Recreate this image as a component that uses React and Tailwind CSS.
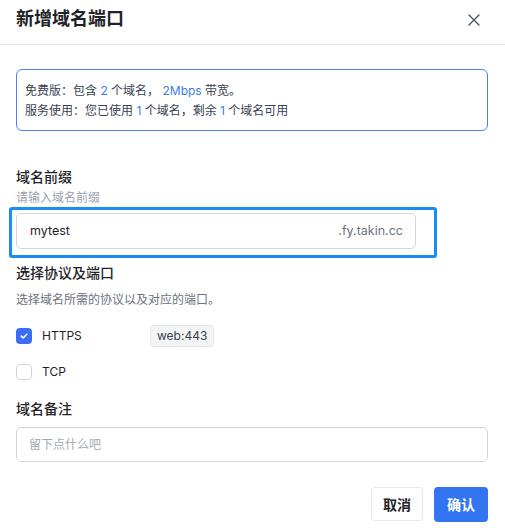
import React from "react";

const font = { fontFamily: 'Inter, "Noto Sans CJK SC", sans-serif' };

function Check() {
  return (
    <svg width="10" height="10" viewBox="0 0 10 10" fill="none">
      <path d="M2.3 5.2 L4.2 7 L7.8 3.3" stroke="white" strokeWidth="1.6" strokeLinecap="round" strokeLinejoin="round" />
    </svg>
  );
}

export default function App() {
  return (
    <div className="w-[505px] h-[528px] bg-white text-[#1f2328]" style={font}>
      <div className="h-[45px] flex items-center justify-between pl-4 pr-[25px] border-b border-[#e5e7eb] pb-[6px]">
        <div className="text-[18px] font-bold leading-[26px]">新增域名端口</div>
        <svg width="12" height="12" viewBox="0 0 12 12" className="mt-[2px]">
          <path d="M1 1 L11 11 M11 1 L1 11" stroke="#4b5563" strokeWidth="1.4" strokeLinecap="round" />
        </svg>
      </div>

      <div className="pl-4 pr-[17px]">
        <div className="mt-6 border border-[#4a80f0] rounded-[6px] pl-2 pr-2 pt-[11px] pb-[9px] text-[12px] leading-[20px] text-[#374151]">
          <div>
            免费版：包含 <span className="text-[#3b7cf5]">2</span> 个域名， <span className="text-[#3b7cf5]">2Mbps</span> 带宽。
          </div>
          <div>
            服务使用：您已使用 <span className="text-[#3b7cf5]">1</span> 个域名，剩余 <span className="text-[#3b7cf5]">1</span> 个域名可用
          </div>
        </div>

        <div className="mt-[36px] text-[14px] leading-[20px] font-medium text-[#1f2328]">域名前缀</div>
        <div className="mt-[3px] text-[12px] leading-[16px] text-[#9ca3af]">请输入域名前缀</div>
        <div className="mt-[1px] -ml-[7px] w-[428px] border-[3px] border-[#1a8cf5] rounded-[3px] pl-[4px] pt-[3px] pr-[18px] pb-[6px]">
          <div className="h-[36px] border border-[#d4d6dd] rounded-[5px] flex items-center justify-between pl-[13px] pr-[12px] text-[12.5px]">
            <span className="text-[#1f2328]">mytest</span>
            <span className="text-[#6b7280]">.fy.takin.cc</span>
          </div>
        </div>

        <div className="mt-[5px] text-[14px] leading-[20px] font-medium text-[#1f2328]">选择协议及端口</div>
        <div className="mt-[9px] text-[12px] leading-[16px] text-[#6b7280]">选择域名所需的协议以及对应的端口。</div>

        <div className="mt-[17px] flex flex-col gap-[14px]">
          <div className="h-[22px] flex items-center">
            <div className="w-4 h-4 rounded-[4px] bg-[#3b6ef5] flex items-center justify-center">
              <Check />
            </div>
            <span className="ml-[10px] w-[108px] text-[12px] text-[#1f2328]">HTTPS</span>
            <span className="h-[22px] px-[6px] flex items-center rounded-[4px] bg-[#f3f4f6] border border-[#e5e7eb] text-[12px] text-[#374151]">web:443</span>
          </div>
          <div className="h-[22px] flex items-center">
            <div className="w-4 h-4 rounded-[4px] border border-[#d1d5db] bg-white" />
            <span className="ml-[10px] text-[12px] text-[#1f2328]">TCP</span>
          </div>
        </div>

        <div className="mt-[16px] text-[14px] leading-[20px] font-medium text-[#1f2328]">域名备注</div>
        <div className="mt-[8px] h-[35px] border border-[#d4d6dd] rounded-[5px] flex items-center pl-[12px] text-[12px] text-[#a3a8b1]">
          留下点什么吧
        </div>

        <div className="mt-[25px] flex justify-end gap-[11px]">
          <button className="w-[52px] h-[34px] border border-[#e5e7eb] rounded-[4px] bg-white text-[14px] font-bold text-[#1f2328]">取消</button>
          <button className="w-[54px] h-[35px] rounded-[4px] bg-[#3374f0] text-[14px] font-bold text-white">确认</button>
        </div>
      </div>
    </div>
  );
}
